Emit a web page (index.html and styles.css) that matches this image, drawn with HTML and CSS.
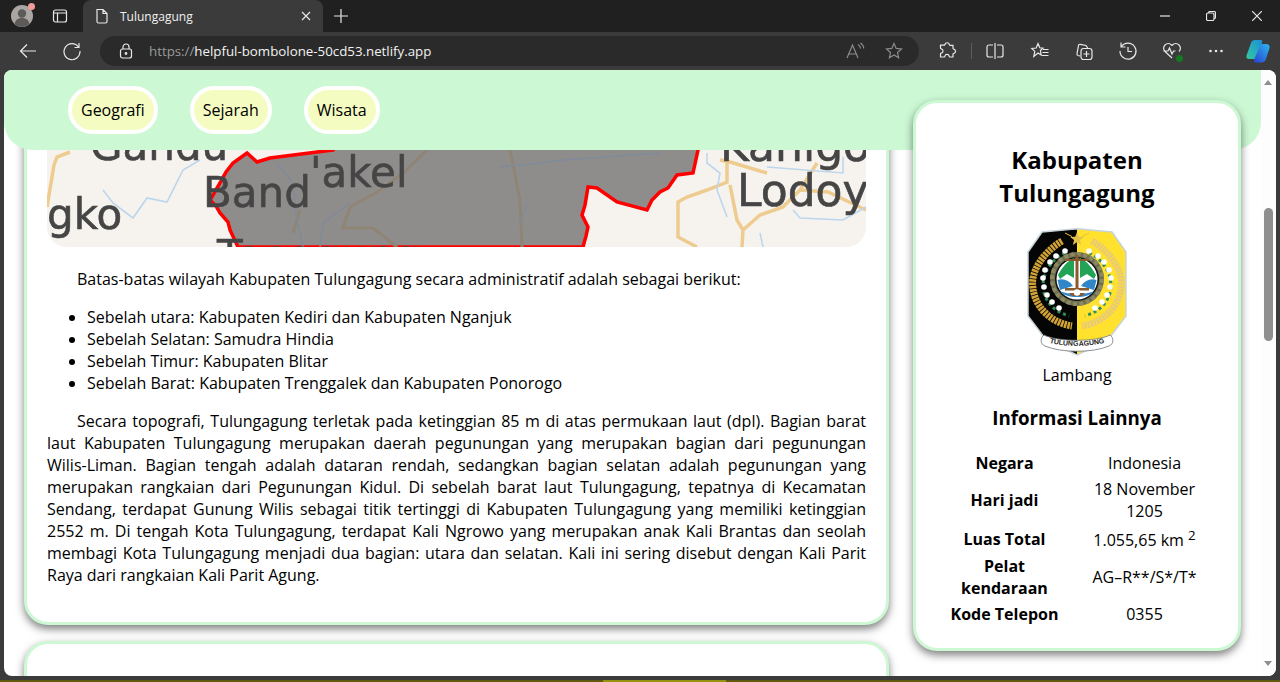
FILE: index.html
```html
<!DOCTYPE html>
<html>
	<head>
		<meta charset="utf-8" />
		<meta name="viewport" content="width=device-width, initial-scale=1.0" />
		<title>Tulungagung</title>
		<link rel="stylesheet" href="styles.css">
	</head>
	<body>
		<div class="browser">
			<!-- tab strip -->
			<div class="tabstrip">
				<div class="avatar">
					<svg viewBox="0 0 22 22" width="22" height="22">
						<circle cx="11" cy="11" r="11" fill="#aaa6a3"/>
						<circle cx="11" cy="8.5" r="4.2" fill="#5d5b5a"/>
						<path d="M3.5 19c1-4.500 4-6 7.500-6s6.500 1.500 7.500 6a11 11 0 0 1-15 0z" fill="#5d5b5a"/>
					</svg>
					<span class="avatar-dot"></span>
				</div>
				<svg class="panel-btn icon" viewBox="0 0 16 16" width="16" height="16">
					<rect x="1.500" y="2" width="13" height="12" rx="2"/>
					<path d="M1.500 5h13M5.500 5v9"/>
				</svg>
				<div class="tab">
					<svg class="icon" viewBox="0 0 16 16" width="16" height="16">
						<path d="M3 1.500h6l4 4v8a1.500 1.500 0 0 1-1.500 1.500h-7A1.500 1.500 0 0 1 3 13.500zM9 1.500v4h4"/>
					</svg>
					<span class="tab-title">Tulungagung</span>
					<svg class="icon tab-close" viewBox="0 0 10 10" width="10" height="10">
						<path d="M1 1l8 8M9 1l-8 8"/>
					</svg>
				</div>
				<svg class="new-tab icon" viewBox="0 0 14 14" width="14" height="14">
					<path d="M7 0v14M0 7h14"/>
				</svg>
				<div class="win-controls">
					<div class="win-btn">
						<svg class="icon" viewBox="0 0 10 10" width="10" height="10"><path d="M0 5h10"/></svg>
					</div>
					<div class="win-btn">
						<svg class="icon" viewBox="0 0 10 10" width="10" height="10">
							<rect x="0.500" y="2" width="7.500" height="7.500" rx="1.500"/>
							<path d="M2.500 2v-.200A1.300 1.300 0 0 1 3.800.500h4.400a1.300 1.300 0 0 1 1.300 1.300v4.400A1.300 1.300 0 0 1 8 7.500"/>
						</svg>
					</div>
					<div class="win-btn">
						<svg class="icon" viewBox="0 0 10 10" width="10" height="10"><path d="M0 0l10 10M10 0l-10 10"/></svg>
					</div>
				</div>
			</div>

			<!-- toolbar -->
			<div class="toolbar">
				<div class="tool">
					<svg class="icon" viewBox="0 0 20 20" width="20" height="20"><path d="M18 10H2.500M9 3.500L2.500 10 9 16.500"/></svg>
				</div>
				<div class="tool">
					<svg class="icon" viewBox="0 0 20 20" width="20" height="20">
						<path d="M16.500 6A8 8 0 1 0 18 10M17 2v4.500h-4.500"/>
					</svg>
				</div>
				<div class="omnibox">
					<svg class="icon lock" viewBox="0 0 14 16" width="14" height="16">
						<rect x="1.500" y="6" width="11" height="9" rx="2"/>
						<path d="M4 6V4a3 3 0 0 1 6 0v2"/>
						<circle cx="7" cy="10.500" r=".8"/>
					</svg>
					<span class="url"><span class="url-scheme">https://</span>helpful-bombolone-50cd53.netlify.app</span>
					<svg class="icon dim read-aloud" viewBox="0 0 20 20" width="20" height="20">
						<path d="M2 17L7.500 4 13 17M4 13h7M13 3.500c1.500 1 2.500 2.500 2.500 4M15.500 2c2 1.300 3.200 3.300 3.200 5.500"/>
					</svg>
					<svg class="icon dim" viewBox="0 0 20 20" width="20" height="20">
						<path d="M10 2.500l2.200 4.900 5.300.500-4 3.600 1.100 5.200L10 14l-4.600 2.700 1.100-5.200-4-3.600 5.300-.500z"/>
					</svg>
				</div>
				<div class="tool tool-ext">
					<svg class="icon" viewBox="0 0 20 20" width="20" height="20">
						<path d="M8 3.500a2.200 2.200 0 0 1 4.300 0c0 .5.300.8.800.8H16v3c0 .5.400.8.800.8a2.200 2.200 0 0 1 0 4.300c-.5 0-.8.300-.8.800V16h-3c-.5 0-.8-.4-.8-.8a2.200 2.200 0 0 0-4.300 0c0 .5-.3.800-.8.800H3.500v-3c0-.5.400-.8.800-.8a2.200 2.200 0 0 0 0-4.300c-.5 0-.8-.3-.8-.8v-3h3.700c.4 0 .6-.3.600-.6z"/>
					</svg>
				</div>
				<span class="tool-sep"></span>
				<div class="tool tool-split">
					<svg class="icon" viewBox="0 0 20 20" width="20" height="20">
						<path d="M8 4H4a2 2 0 0 0-2 2v8a2 2 0 0 0 2 2h4M12 4h4a2 2 0 0 1 2 2v8a2 2 0 0 1-2 2h-4M10 2v16"/>
					</svg>
				</div>
				<div class="tool">
					<svg class="icon" viewBox="0 0 20 20" width="20" height="20">
						<path d="M8 2.500l1.800 4.300 3.200.3-2.600 2.400.8 4.500L8 12l-4.200 3.500 1-5.100-3-2.900 4.400-.5zM13 8.500h5.500M12.500 11.500h6M12 14.500h6.500"/>
					</svg>
				</div>
				<div class="tool">
					<svg class="icon" viewBox="0 0 20 20" width="20" height="20">
						<path d="M6 15l-2-.5a1.500 1.500 0 0 1-1-1.800L4.500 4.500A1.500 1.500 0 0 1 6.300 3.300L12 4.500l2 3"/>
						<rect x="7" y="7.500" width="11" height="11" rx="2.500"/>
						<path d="M12.500 10v6M9.500 13h6"/>
					</svg>
				</div>
				<div class="tool">
					<svg class="icon" viewBox="0 0 20 20" width="20" height="20">
						<path d="M3.500 5.500A8 8 0 1 1 2 10M3 1.500v4.500h4.500M10 6v4.500h4"/>
					</svg>
				</div>
				<div class="tool tool-health">
					<svg class="icon" viewBox="0 0 20 20" width="20" height="20">
						<path d="M10 17L3 10.500a4.500 4.500 0 0 1 0-6.500 4.600 4.600 0 0 1 6.500 0l.5.500.5-.5a4.600 4.600 0 0 1 6.500 0 4.500 4.500 0 0 1 0 6.500M1.500 10H6l1.500-3 2.500 6 1.500-3h2"/>
					</svg>
					<span class="health-dot"></span>
				</div>
				<div class="tool">
					<svg viewBox="0 0 20 20" width="20" height="20" fill="#e6e6e6">
						<circle cx="4.500" cy="10" r="1.300"/><circle cx="10" cy="10" r="1.300"/><circle cx="15.500" cy="10" r="1.300"/>
					</svg>
				</div>
				<div class="tool tool-copilot">
					<svg viewBox="0 0 24 24" width="24" height="24">
						<defs>
							<linearGradient id="copA" x1="0" y1="1" x2="1" y2="0">
								<stop offset="0" stop-color="#33c7a0"/>
								<stop offset="1" stop-color="#1c8fd8"/>
							</linearGradient>
							<linearGradient id="copB" x1="0" y1="1" x2="1" y2="0">
								<stop offset="0" stop-color="#2a3fd0"/>
								<stop offset="1" stop-color="#2bb8f0"/>
							</linearGradient>
						</defs>
						<path d="M9 1h6c1.500 0 1.500 1 1 2.500L11 18c-.5 1.500-1.500 2-3 2H3c-2 0-3-1.500-2.500-3.500L5 4c.6-2 2-3 4-3z" fill="url(#copA)"/>
						<path d="M16 5h4c2.500 0 4 1.500 3.500 4L20 20c-.6 2-2.200 3.500-4.500 3.500H9c-1.500 0-1.500-1-1-2.500l6-14c.4-1.200 1-2 2-2z" fill="url(#copB)"/>
					</svg>
				</div>
			</div>

			<!-- page -->
			<div class="viewport">
				<div class="page">
					<nav class="nav">
						<a class="nav-item">Geografi</a>
						<a class="nav-item">Sejarah</a>
						<a class="nav-item">Wisata</a>
					</nav>
					<div class="content">
						<main class="articles">
							<section class="card">
								<svg class="map" viewBox="47 63 819 184" width="819" height="184">
									<defs>
										<filter id="soft"><feGaussianBlur stdDeviation="0.7"/></filter>
									</defs>
									<rect x="47" y="63" width="819" height="184" fill="#f6f3ef"/>
									<g filter="url(#soft)">
										<path class="road" d="M47 207L54 165 57 157 70 152M720 160L730 162 767 173M727 150V182L707 190 687 197 678 202V237L697 247M730 185L737 220 743 230 742 247M743 230L760 215 783 207 800 190 817 163M800 190L828 192 866 210"/>
										<path class="river" d="M103 190L113 203 133 218 147 198 167 202 183 170 200 160M707 153V163L720 173 717 190 727 217M767 167L843 173V157M793 210L800 218 843 220 866 207M760 233L763 247"/>
										<path class="area" d="M333 150L270 158 257 162 247 153 233 163 226 172 220 183 210 200 216 206 220 213 228 222 230 230 238 247 583 247 586 236 588 227 582 215 585 205 588 187 597 188 617 202 647 210 652 200 660 192 668 188 677 175 693 173 698 150 700 60 330 60z"/>
										<path class="road-dim" d="M510 150L520 200 522 247M427 150L403 173 377 192 350 207 343 228 373 228 397 247M300 210L293 233"/>
										<path class="river-dim" d="M277 163L293 183 297 220 303 247M350 203L323 223 320 247M500 167L540 163 563 160 660 153M527 203L520 223"/>
										<text class="map-label" x="90" y="160">Gandu</text>
										<text class="map-label" x="47" y="229">gko</text>
										<text class="map-label" x="203" y="207">Band</text>
										<text class="map-label" x="310" y="187">'akel</text>
										<text class="map-label map-label-lg" x="720" y="161">Kanigo</text>
										<text class="map-label map-label-lg" x="737" y="206">Lodoy</text>
										<text class="map-label" x="217" y="270">Tenggung</text>
									</g>
								</svg>
								<p class="para">Batas-batas wilayah Kabupaten Tulungagung secara administratif adalah sebagai berikut:</p>
								<ul class="list">
									<li>Sebelah utara: Kabupaten Kediri dan Kabupaten Nganjuk</li>
									<li>Sebelah Selatan: Samudra Hindia</li>
									<li>Sebelah Timur: Kabupaten Blitar</li>
									<li>Sebelah Barat: Kabupaten Trenggalek dan Kabupaten Ponorogo</li>
								</ul>
								<p class="para">Secara topografi, Tulungagung terletak pada ketinggian 85 m di atas permukaan laut (dpl). Bagian barat laut Kabupaten Tulungagung merupakan daerah pegunungan yang merupakan bagian dari pegunungan <span class="nobreak">Wilis-Liman.</span> Bagian tengah adalah dataran rendah, sedangkan bagian selatan adalah pegunungan yang merupakan rangkaian dari Pegunungan Kidul. Di sebelah barat laut Tulungagung, tepatnya di Kecamatan Sendang, terdapat Gunung Wilis sebagai titik tertinggi di Kabupaten Tulungagung yang memiliki ketinggian 2552 m. Di tengah Kota Tulungagung, terdapat Kali Ngrowo yang merupakan anak Kali Brantas dan seolah membagi Kota Tulungagung menjadi dua bagian: utara dan selatan. Kali ini sering disebut dengan Kali Parit Raya dari rangkaian Kali Parit Agung.</p>
							</section>
							<section class="card card-next"></section>
						</main>
						<aside class="sidebar">
							<h2 class="side-title">Kabupaten Tulungagung</h2>
							<svg class="crest" viewBox="0 0 100 128" width="100" height="128">
								<path d="M50 1L85 4 99 24V88L80 113 50 127z" fill="#ffe12e"/>
								<path d="M50 1L15 4 1 24V88L20 113 50 127z" fill="#050505"/>
								<path d="M50 .8L85 4 99 24V88L80 113 50 127 20 113 1 88V24L15 4z" fill="none" stroke="#c6d3da" stroke-width="1.500"/>
								<!-- wreath -->
								<path d="M35 13C15 25 3 45 6 60 8 80 25 95 45 98" fill="none" stroke="#d2a437" stroke-width="7" stroke-dasharray="2.500 .8"/>
								<path d="M65 13C85 25 97 45 94 60 92 80 75 95 55 98" fill="none" stroke="#e9cb74" stroke-width="7" stroke-dasharray="2.500 .8"/>
								<path d="M38 25C22 32 13 50 17 65 21 78 30 84 42 88M62 25C78 32 87 50 83 65 79 78 70 84 58 88" fill="none" stroke="#2f8f5a" stroke-width="3" stroke-dasharray="3 3"/>
								<g fill="#fff">
									<circle cx="38" cy="23" r="2.800"/><circle cx="29" cy="28" r="2.800"/><circle cx="23" cy="34" r="2.800"/>
									<circle cx="18" cy="42" r="2.800"/><circle cx="16" cy="50" r="2.800"/><circle cx="17" cy="59" r="2.800"/>
									<circle cx="20" cy="67" r="2.800"/><circle cx="25" cy="74" r="2.800"/><circle cx="32" cy="80" r="2.800"/>
									<circle cx="62" cy="23" r="2.800"/><circle cx="71" cy="28" r="2.800"/><circle cx="77" cy="34" r="2.800"/>
									<circle cx="82" cy="42" r="2.800"/><circle cx="84" cy="50" r="2.800"/><circle cx="83" cy="59" r="2.800"/>
									<circle cx="80" cy="67" r="2.800"/><circle cx="75" cy="74" r="2.800"/><circle cx="68" cy="80" r="2.800"/>
								</g>
								<!-- star and rays -->
								<path d="M38 5l7 3.500M62 5l-7 3.500" stroke="#e6c23a" stroke-width="1"/>
								<path d="M50 4l1.800 4.700 5 .3-3.900 3.100 1.300 4.800L50 14.200 45.800 16.900l1.300-4.800L43.200 9l5-.3z" fill="#e3c04a"/>
								<!-- emblem -->
								<circle cx="50" cy="51" r="27" fill="#6e6f50"/>
								<circle cx="50" cy="51" r="25" fill="none" stroke="#8d8a62" stroke-width="4" stroke-dasharray="4 2.500"/>
								<circle cx="50" cy="51" r="22" fill="#111"/>
								<circle cx="50" cy="51" r="20.500" fill="#fff"/>
								<path d="M31 47C35 40 40 33 47 30V50L40 46 33 51z" fill="#22a355"/>
								<path d="M69 47C65 40 60 33 53 30V50L60 46 67 51z" fill="#22a355"/>
								<path d="M30.500 52C36 50 42 52 46 58L33 62zM69.500 52C64 50 58 52 54 58L67 62z" fill="#2f86c9"/>
								<path d="M48.500 27h3v36h-3zM38 60h24v2.500H38zM38 31h24v2H38z" fill="#8a5a2c"/>
								<path d="M33 63C40 67 60 67 67 63 62 71 38 71 33 63z" fill="#2f86c9"/>
								<path d="M42 65h16l-3 3H45z" fill="#8a5a2c"/>
								<circle cx="50" cy="64.500" r="3.200" fill="#fff"/>
								<!-- ribbon -->
								<path d="M17 107C30 114 70 114 83 107 87 110 87 116 82 118 66 125 34 125 18 118 13 116 13 110 17 107z" fill="#fff" stroke="#6f7476" stroke-width=".8"/>
								<path id="ribbonLine" d="M18 113C32 119.500 68 119.500 82 113" fill="none"/>
								<text class="crest-label"><textPath href="#ribbonLine" startOffset="50%" text-anchor="middle">TULUNGAGUNG</textPath></text>
							</svg>
							<div class="crest-caption">Lambang</div>
							<h3 class="side-sub">Informasi Lainnya</h3>
							<table class="facts">
								<colgroup>
									<col class="facts-key">
									<col>
								</colgroup>
								<tr><th>Negara</th><td>Indonesia</td></tr>
								<tr><th>Hari jadi</th><td>18 November 1205</td></tr>
								<tr><th>Luas Total</th><td>1.055,65 km <sup>2</sup></td></tr>
								<tr><th>Pelat kendaraan</th><td>AG–R**/S*/T*</td></tr>
								<tr><th>Kode Telepon</th><td>0355</td></tr>
							</table>
						</aside>
					</div>
				</div>
				<div class="scrollbar">
					<span class="arrow-up"></span>
					<span class="thumb"></span>
					<span class="arrow-down"></span>
				</div>
			</div>

			<!-- taskbar edge -->
			<div class="taskbar-edge">
				<span class="edge-left"></span>
				<span class="edge-light"></span>
				<span class="edge-right"></span>
			</div>
		</div>
	</body>
</html>
```

FILE: styles.css
```css
html,
body
{
	margin: 0;
	height: 100%;
	overflow: hidden;
	font-family: "Open Sans", "Noto Sans", sans-serif;
}
.browser
{
	width: 1280px;
	height: 682px;
	display: flex;
	flex-direction: column;
	background: #3b3b3b;
}
.icon
{
	fill: none;
	stroke: #e8e8e8;
	stroke-width: 1.2;
	flex: none;
}
.icon.dim
{
	stroke: #8c8c8c;
}
/* tab strip */
.tabstrip
{
	height: 32px;
	flex: none;
	display: flex;
	align-items: center;
	background: #202020;
	padding-left: 11px;
}
.avatar
{
	position: relative;
	width: 22px;
	height: 22px;
}
.avatar-dot
{
	position: absolute;
	top: -2px;
	right: -2px;
	width: 7px;
	height: 7px;
	border-radius: 50%;
	background: #f29b98;
}
.panel-btn
{
	margin-left: 19px;
}
.tab
{
	width: 240px;
	height: 32px;
	margin-left: 15px;
	padding: 0 11px;
	box-sizing: border-box;
	display: flex;
	align-items: center;
	background: #3b3b3b;
	border-radius: 8px 8px 0 0;
}
.tab-title
{
	margin-left: 10px;
	font-size: 12px;
	color: #f0f0f0;
}
.tab-close
{
	margin-left: auto;
	margin-right: 0;
	position: relative;
	left: -1px;
}
.new-tab
{
	margin-left: 11px;
}
.win-controls
{
	margin-left: auto;
	display: flex;
}
.win-btn
{
	width: 46px;
	height: 32px;
	display: flex;
	align-items: center;
	justify-content: center;
}
/* toolbar */
.toolbar
{
	height: 38px;
	flex: none;
	display: flex;
	align-items: center;
	padding-left: 6px;
}
.tool
{
	position: relative;
	width: 44px;
	height: 32px;
	flex: none;
	display: flex;
	align-items: center;
	justify-content: center;
}
.tool-ext
{
	margin-left: 6px;
}
.tool-sep
{
	width: 1px;
	height: 16px;
	margin-left: 2px;
	margin-right: 1px;
	background: #5e5e5e;
}
.tool-split
{
	margin-right: 1px;
}
.tool-copilot
{
	width: 42px;
	padding-right: 2px;
	box-sizing: border-box;
}
.health-dot
{
	position: absolute;
	right: 10px;
	bottom: 4px;
	width: 7px;
	height: 7px;
	border-radius: 50%;
	background: #127a1f;
	border: 1px solid #3b3b3b;
}
.omnibox
{
	flex: 1;
	height: 30px;
	margin-left: 6px;
	padding: 0 15px 0 19px;
	display: flex;
	align-items: center;
	background: #2a2a2a;
	border-radius: 15px;
}
.url
{
	margin-left: 16px;
	font-size: 13.3px;
	color: #f2f2f2;
	white-space: nowrap;
}
.url-scheme
{
	color: #9a9a9a;
}
.read-aloud
{
	margin-left: auto;
	margin-right: 19px;
}
/* page */
.viewport
{
	flex: 1;
	min-height: 0;
	margin: 0 4px 4px;
	display: flex;
	background: #fff;
	border-radius: 8px;
	overflow: hidden;
}
.page
{
	position: relative;
	flex: 1;
	overflow: hidden;
}
.nav
{
	position: absolute;
	top: 0;
	left: 0;
	right: 0;
	z-index: 1;
	height: 80px;
	padding: 16px 0 0 64px;
	box-sizing: border-box;
	display: flex;
	align-items: flex-start;
	gap: 32px;
	background: #ccf8d4;
	border-radius: 0 0 28px 28px;
}
.nav-item
{
	height: 48px;
	padding: 0 9px;
	box-sizing: border-box;
	display: flex;
	align-items: center;
	font-size: 16px;
	color: #000;
	background: #f5fcc2;
	border: 4px solid #fff;
	border-radius: 24px;
}
.content
{
	display: flex;
	align-items: flex-start;
	gap: 24px;
	padding-left: 20px;
}
.articles
{
	width: 865px;
	flex: none;
	margin-top: -30px;
	display: flex;
	flex-direction: column;
	gap: 16px;
}
.card
{
	padding: 20px;
	background: #fff;
	border: 3px solid #ccf8d4;
	border-radius: 24px;
	box-shadow: 0 4px 9px rgba(0, 0, 0, 0.5);
}
.card-next
{
	height: 100px;
}
.map
{
	display: block;
	margin-bottom: 21px;
	border-radius: 0 0 20px 20px;
}
.area
{
	fill: #8f8d8c;
	stroke: #ff0000;
	stroke-width: 3.5;
}
.road
{
	fill: none;
	stroke: #eecb8e;
	stroke-width: 3.5;
}
.road-dim
{
	fill: none;
	stroke: #8f8574;
	stroke-width: 3;
}
.river
{
	fill: none;
	stroke: #bcd6ec;
	stroke-width: 1.6;
}
.river-dim
{
	fill: none;
	stroke: #7f8a9b;
	stroke-width: 1.4;
}
.map-label
{
	font-family: "DejaVu Sans", sans-serif;
	font-size: 42px;
	fill: #454545;
	stroke: #454545;
	stroke-width: 0.6;
}
.map-label-lg
{
	font-size: 44px;
}
.para
{
	margin: 0 0 16px;
	font-size: 16px;
	color: #000;
	text-align: justify;
	text-indent: 30px;
}
.nobreak
{
	white-space: nowrap;
}
.list
{
	margin: 0 0 16px;
	padding-left: 40px;
	font-size: 16px;
	color: #000;
}
/* sidebar */
.sidebar
{
	position: relative;
	z-index: 2;
	width: 328px;
	flex: none;
	margin-top: 30px;
	padding: 20px;
	box-sizing: border-box;
	text-align: center;
	color: #000;
	background: #fff;
	border: 3px solid #ccf8d4;
	border-radius: 24px;
	box-shadow: 0 4px 9px rgba(0, 0, 0, 0.5);
}
.side-title
{
	margin: 20px 16px 19px;
	font-size: 24px;
}
.crest
{
	display: block;
	margin: 0 auto;
}
.crest-label
{
	font-family: "Liberation Sans", sans-serif;
	font-size: 7px;
	font-weight: bold;
	fill: #222;
}
.crest-caption
{
	margin-top: 8px;
	font-size: 16px;
}
.side-sub
{
	margin: 19px 0 19px;
	font-size: 18.72px;
}
.facts
{
	width: 100%;
	table-layout: fixed;
	font-size: 16px;
}
.facts-key
{
	width: 133px;
}
.facts th,
.facts td
{
	padding: 1px 10px;
	text-align: center;
}
/* scrollbar */
.scrollbar
{
	width: 15px;
	flex: none;
	position: relative;
	background: #fdfdfd;
}
.thumb
{
	display: block;
	width: 9px;
	height: 133px;
	margin: 138px 0 0 3px;
	border-radius: 5px;
	background: #8f8f8f;
}
.arrow-up,
.arrow-down
{
	position: absolute;
	left: 3px;
	border-left: 4.5px solid transparent;
	border-right: 4.5px solid transparent;
}
.arrow-up
{
	top: 10px;
	border-bottom: 5px solid #8f8f8f;
}
.arrow-down
{
	bottom: 10px;
	border-top: 5px solid #8f8f8f;
}
.taskbar-edge
{
	height: 2px;
	flex: none;
	display: flex;
}
.edge-left
{
	width: 603px;
	background: #5f5a10;
}
.edge-light
{
	width: 123px;
	background: #97930f;
}
.edge-right
{
	flex: 1;
	background: #5f5a10;
}
```
